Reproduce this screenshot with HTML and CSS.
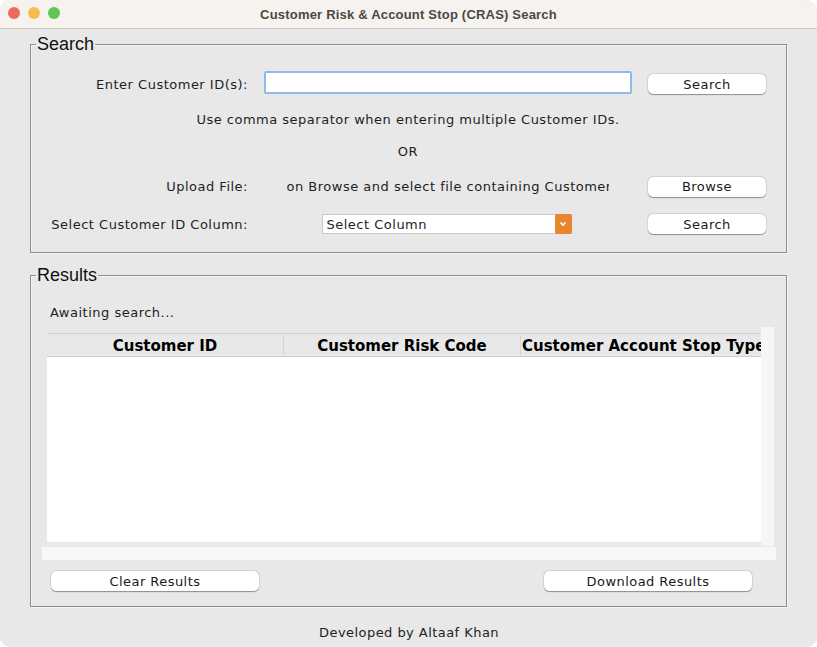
FILE: index.html
```html
<!DOCTYPE html>
<html>
<head>
<meta charset="utf-8">
<link rel="stylesheet" href="styles.css">
</head>
<body>
<div class="window">
  <div class="titlebar">
    <div class="lights">
      <span class="light red"></span>
      <span class="light yellow"></span>
      <span class="light green"></span>
    </div>
    <div class="title">Customer Risk &amp; Account Stop (CRAS) Search</div>
  </div>
  <div class="content">
    <fieldset class="group search-group">
      <legend>Search</legend>
      <div class="search-grid">
        <div class="label">Enter Customer ID(s):</div>
        <div class="mid"><div class="textinput"></div></div>
        <div class="btncell"><div class="btn">Search</div></div>

        <div class="note">Use comma separator when entering multiple Customer IDs.</div>

        <div class="note">OR</div>

        <div class="label">Upload File:</div>
        <div class="mid"><div class="filetext">on Browse and select file containing Customer</div></div>
        <div class="btncell"><div class="btn">Browse</div></div>

        <div class="label">Select Customer ID Column:</div>
        <div class="mid">
          <div class="select">
            <span class="select-text">Select Column</span>
            <span class="select-arrow"><svg width="8" height="6" viewBox="0 0 8 6"><path d="M1.5 1.5 L4 4 L6.5 1.5" fill="none" stroke="#fff" stroke-width="1.6"/></svg></span>
          </div>
        </div>
        <div class="btncell"><div class="btn">Search</div></div>
      </div>
    </fieldset>

    <fieldset class="group results-group">
      <legend>Results</legend>
      <div class="results-inner">
        <div class="status">Awaiting search...</div>
        <div class="tablewrap">
          <div class="tablerow">
            <div class="tree">
              <div class="thead">
                <div class="th">Customer ID</div>
                <div class="th">Customer Risk Code</div>
                <div class="th th-left">Customer Account Stop Type</div>
              </div>
              <div class="tbody"></div>
            </div>
            <div class="vscroll"></div>
          </div>
          <div class="hscroll"></div>
        </div>
        <div class="actions">
          <div class="btn wide">Clear Results</div>
          <div class="btn wide">Download Results</div>
        </div>
      </div>
    </fieldset>

    <div class="footer">Developed by Altaaf Khan</div>
  </div>
</div>
</body>
</html>
```

FILE: styles.css
```css
html, body {
  margin: 0;
  padding: 0;
  background: #ffffff;
}
body {
  font-family: "DejaVu Sans", Verdana, sans-serif;
  font-size: 13px;
  letter-spacing: 0.5px;
  color: #1e1e1e;
}
.window {
  width: 817px;
  height: 647px;
  background: #e8e8e8;
  border-radius: 10px;
  overflow: hidden;
  display: flex;
  flex-direction: column;
}
.titlebar {
  height: 28px;
  flex: none;
  background: #f6f3ee;
  border-bottom: 1px solid #c6c4c2;
  position: relative;
  display: flex;
  align-items: center;
  justify-content: center;
}
.lights {
  position: absolute;
  left: 8px;
  top: 7px;
  display: flex;
  gap: 8px;
}
.light {
  width: 12px;
  height: 12px;
  border-radius: 50%;
  display: block;
}
.red { background: #ee6a5f; }
.yellow { background: #f5bd4f; }
.green { background: #61c454; }
.title {
  font-family: "Liberation Sans", Arial, sans-serif;
  font-weight: bold;
  font-size: 13px;
  letter-spacing: 0.2px;
  color: #4b4845;
  margin-top: 1px;
}
.content {
  flex: 1;
  padding: 5px 30px 0 30px;
  display: flex;
  flex-direction: column;
}
.group {
  margin: 0;
  padding: 0;
  border: 1px solid #8d8d8d;
  box-shadow: 1px 1px 0 #f4f4f4, inset 1px 1px 0 #f4f4f4;
  min-width: 0;
}
.group legend {
  font-family: "Liberation Sans", Arial, sans-serif;
  font-size: 18px;
  line-height: 20px;
  letter-spacing: 0;
  padding: 0 1px;
  margin-left: 5px;
  color: #111;
}
.search-group {
  padding: 16px 0 15px 0;
}
.search-grid {
  padding-left: 19px;
  display: grid;
  grid-template-columns: 198px 368px 118px;
  column-gap: 16px;
  grid-template-rows: 28px 42px 22px 49px 26px;
  align-items: center;
}
.label {
  text-align: right;
  white-space: nowrap;
}
.mid {
  display: flex;
  justify-content: center;
}
.note {
  grid-column: 1 / 4;
  text-align: center;
}
.textinput {
  width: 364px;
  height: 19px;
  background: #fff;
  border: 2px solid #93b7ef;
  border-radius: 2px;
  margin-top: -3px;
}
.filetext {
  width: 322px;
  overflow: hidden;
  white-space: nowrap;
  text-align: center;
  margin-right: 1px;
}
.btncell {
  display: flex;
}
.btn {
  width: 118px;
  height: 20px;
  background: #ffffff;
  border-radius: 5px;
  box-shadow: 0 0.5px 1px rgba(0,0,0,0.35), 0 0 0 0.5px rgba(0,0,0,0.12);
  display: flex;
  align-items: center;
  justify-content: center;
  color: #1a1a1a;
  font-size: 13px;
  letter-spacing: 0.45px;
}
.select {
  width: 250px;
  height: 20px;
  background: #fff;
  border: 1px solid #c9c9c9;
  box-sizing: border-box;
  display: flex;
  align-items: center;
  justify-content: space-between;
  margin-left: -3px;
}
.select-text {
  padding-left: 4px;
}
.select-arrow {
  width: 17px;
  height: 20px;
  margin-right: -1px;
  background: #e8862f;
  border-radius: 2px;
  display: flex;
  align-items: center;
  justify-content: center;
}
.results-group {
  margin-top: 12px;
  padding: 0;
}
.results-inner {
  padding: 14px 10px 15px 0;
}
.status {
  padding-left: 19px;
  padding-top: 3px;
  height: 22px;
  line-height: 22px;
}
.tablewrap {
  margin-top: 3px;
  margin-left: 11px;
  display: flex;
  flex-direction: column;
}
.tablerow {
  display: flex;
  height: 220px;
}
.tree {
  flex: 1;
  padding: 6px 0 5px 5px;
  display: flex;
  flex-direction: column;
}
.thead {
  height: 22px;
  border-top: 1px solid #cfcfcf;
  border-bottom: 1px solid #cfcfcf;
  display: grid;
  grid-template-columns: 237px 237px 1fr;
  align-items: center;
  font-weight: bold;
  font-size: 15px;
  letter-spacing: 0;
  color: #000;
  overflow: hidden;
}
.th {
  text-align: center;
  white-space: nowrap;
  overflow: hidden;
  border-right: 1px solid #d4d4d4;
  line-height: 18px;
  padding-top: 1px;
}
.th-left {
  text-align: left;
  border-right: none;
  padding-left: 1px;
}
.tbody {
  flex: 1;
  background: #ffffff;
}
.vscroll {
  width: 13px;
  background: #f6f6f6;
  margin-right: 2px;
  margin-bottom: 1px;
}
.hscroll {
  height: 13px;
  background: #f7f7f7;
}
.actions {
  display: flex;
  justify-content: space-between;
  padding: 11px 24px 0 20px;
}
.btn.wide {
  width: 208px;
}
.footer {
  text-align: center;
  margin-top: 18px;
  margin-left: 1px;
  letter-spacing: 0.45px;
}
```
